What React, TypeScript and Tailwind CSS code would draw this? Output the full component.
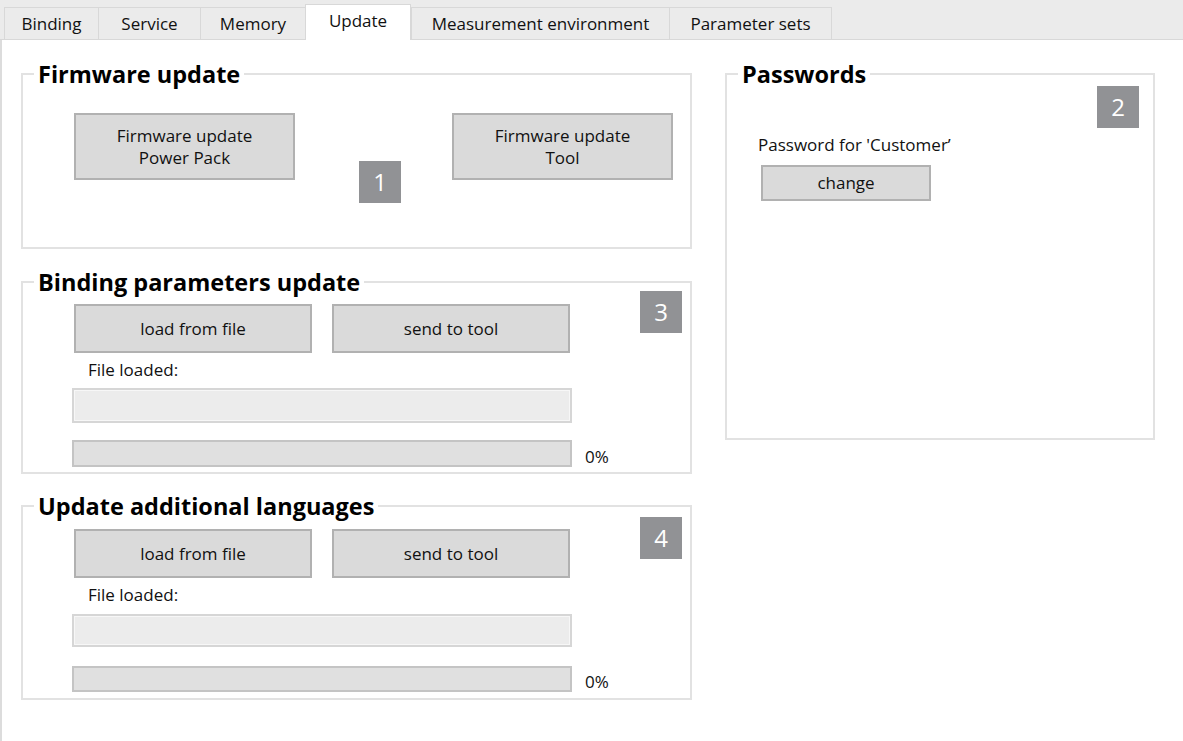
import type { ReactNode } from 'react';

const tabs = [
  { label: 'Binding', width: 'w-[94px]' },
  { label: 'Service', width: 'w-[102px]' },
  { label: 'Memory', width: 'w-[105px]' },
  { label: 'Update', width: 'w-[106px]', active: true },
  { label: 'Measurement environment', width: 'w-[258px]' },
  { label: 'Parameter sets', width: 'w-[163px]', last: true },
];

function Button({ className, children }: { className: string; children: ReactNode }) {
  return (
    <button className={`flex items-center justify-center bg-[#dadada] border-2 border-[#b1b1b1] text-[17px] leading-[22px] text-[#111] text-center ${className}`}>
      {children}
    </button>
  );
}

function Badge({ className, children }: { className: string; children: ReactNode }) {
  return (
    <div className={`w-[42px] h-[42px] shrink-0 flex items-center justify-center bg-[#919295] text-white text-[24px] leading-none ${className}`}>
      {children}
    </div>
  );
}

function Group({ title, className, children }: { title: string; className: string; children: ReactNode }) {
  return (
    <fieldset className={`border-2 border-[#e2e2e2] ${className}`}>
      <legend className="ml-[11px] px-[4px] text-[23.5px] leading-[24px] font-bold text-black">{title}</legend>
      {children}
    </fieldset>
  );
}

// load / send / file loaded / progress block, shared by the two lower groups
function FileTransfer({ badge, buttonTop, badgeTop, labelTop, inputTop, inputH, barTop, barH, bottom }: {
  badge: string; buttonTop: string; badgeTop: string; labelTop: string; inputTop: string; inputH: string; barTop: string; barH: string; bottom: string;
}) {
  return (
    <div className={`pl-[49px] ${bottom}`}>
      <div className="flex items-start pl-[2px]">
        <Button className={`w-[238px] h-[49px] ${buttonTop}`}>load from file</Button>
        <Button className={`ml-[20px] w-[238px] h-[49px] ${buttonTop}`}>send to tool</Button>
        <Badge className={`ml-[70px] ${badgeTop}`}>{badge}</Badge>
      </div>
      <p className={`ml-[16px] text-[17px] leading-[22px] text-[#111] ${labelTop}`}>File loaded:</p>
      <div className={`w-[500px] bg-[#ececec] border-2 border-[#d6d6d6] shadow-[inset_0_0_0_1px_#f7f7f7] ${inputTop} ${inputH}`} />
      <div className={`flex items-end ${barTop}`}>
        <div className={`w-[500px] bg-[#e0e0e0] border-2 border-[#c4c4c4] ${barH}`} />
        <span className="ml-[13px] -mb-[1px] text-[17px] leading-[22px] text-[#111]">0%</span>
      </div>
    </div>
  );
}

export default function App() {
  return (
    <div className="w-[1183px] h-[741px] bg-white overflow-hidden font-['Open_Sans',sans-serif] text-[#111]">
      {/* Tab strip */}
      <div className="h-[40px] bg-[#ebebeb] border-b border-[#d8d8d8] flex items-end pl-[4px]">
        {tabs.map((tab) =>
          tab.active ? (
            <div
              key={tab.label}
              className={`${tab.width} h-[36px] -mb-[1px] bg-white border-x border-t border-[#d8d8d8] flex items-center justify-center pb-[4px] text-[17px] text-[#111]`}
            >
              {tab.label}
            </div>
          ) : (
            <div
              key={tab.label}
              className={`${tab.width} h-[32px] border-t border-l ${tab.last ? 'border-r' : ''} border-[#d8d8d8] flex items-center justify-center text-[17px] text-[#111]`}
            >
              {tab.label}
            </div>
          )
        )}
      </div>

      {/* Page */}
      <div className="h-[701px] border-l-2 border-[#dcdcdc] pl-[19px] pt-[22px] flex items-start">
        <div className="w-[671px] flex flex-col">
          <Group title="Firmware update" className="">
            <div className="h-[161px] flex items-start pl-[51px] pt-[27px]">
              <Button className="w-[221px] h-[67px] flex-col">
                <span>Firmware update</span>
                <span>Power Pack</span>
              </Button>
              <Badge className="ml-[64px] mt-[48px]">1</Badge>
              <Button className="ml-[51px] w-[221px] h-[67px] flex-col">
                <span>Firmware update</span>
                <span>Tool</span>
              </Button>
            </div>
          </Group>

          <Group title="Binding parameters update" className="mt-[21px]">
            <FileTransfer
              badge="3"
              buttonTop="mt-[10px]"
              badgeTop="-mt-[3px]"
              labelTop="mt-[6px]"
              inputTop="mt-[7px]"
              inputH="h-[35px]"
              barTop="mt-[17px]"
              barH="h-[27px]"
              bottom="pb-[5px]"
            />
          </Group>

          <Group title="Update additional languages" className="mt-[20px]">
            <FileTransfer
              badge="4"
              buttonTop="mt-[11px]"
              badgeTop="-mt-[1px]"
              labelTop="mt-[6px]"
              inputTop="mt-[8px]"
              inputH="h-[33px]"
              barTop="mt-[19px]"
              barH="h-[26px]"
              bottom="pb-[6px]"
            />
          </Group>
        </div>

        <Group title="Passwords" className="ml-[33px] w-[430px]">
          <div className="h-[352px] flex flex-col">
            <Badge className="self-end mr-[14px]">2</Badge>
            <p className="mt-[6px] ml-[31px] text-[17px] leading-[22px] text-[#111]">Password for 'Customer’</p>
            <Button className="mt-[9px] ml-[34px] w-[170px] h-[36px]">change</Button>
          </div>
        </Group>
      </div>
    </div>
  );
}
